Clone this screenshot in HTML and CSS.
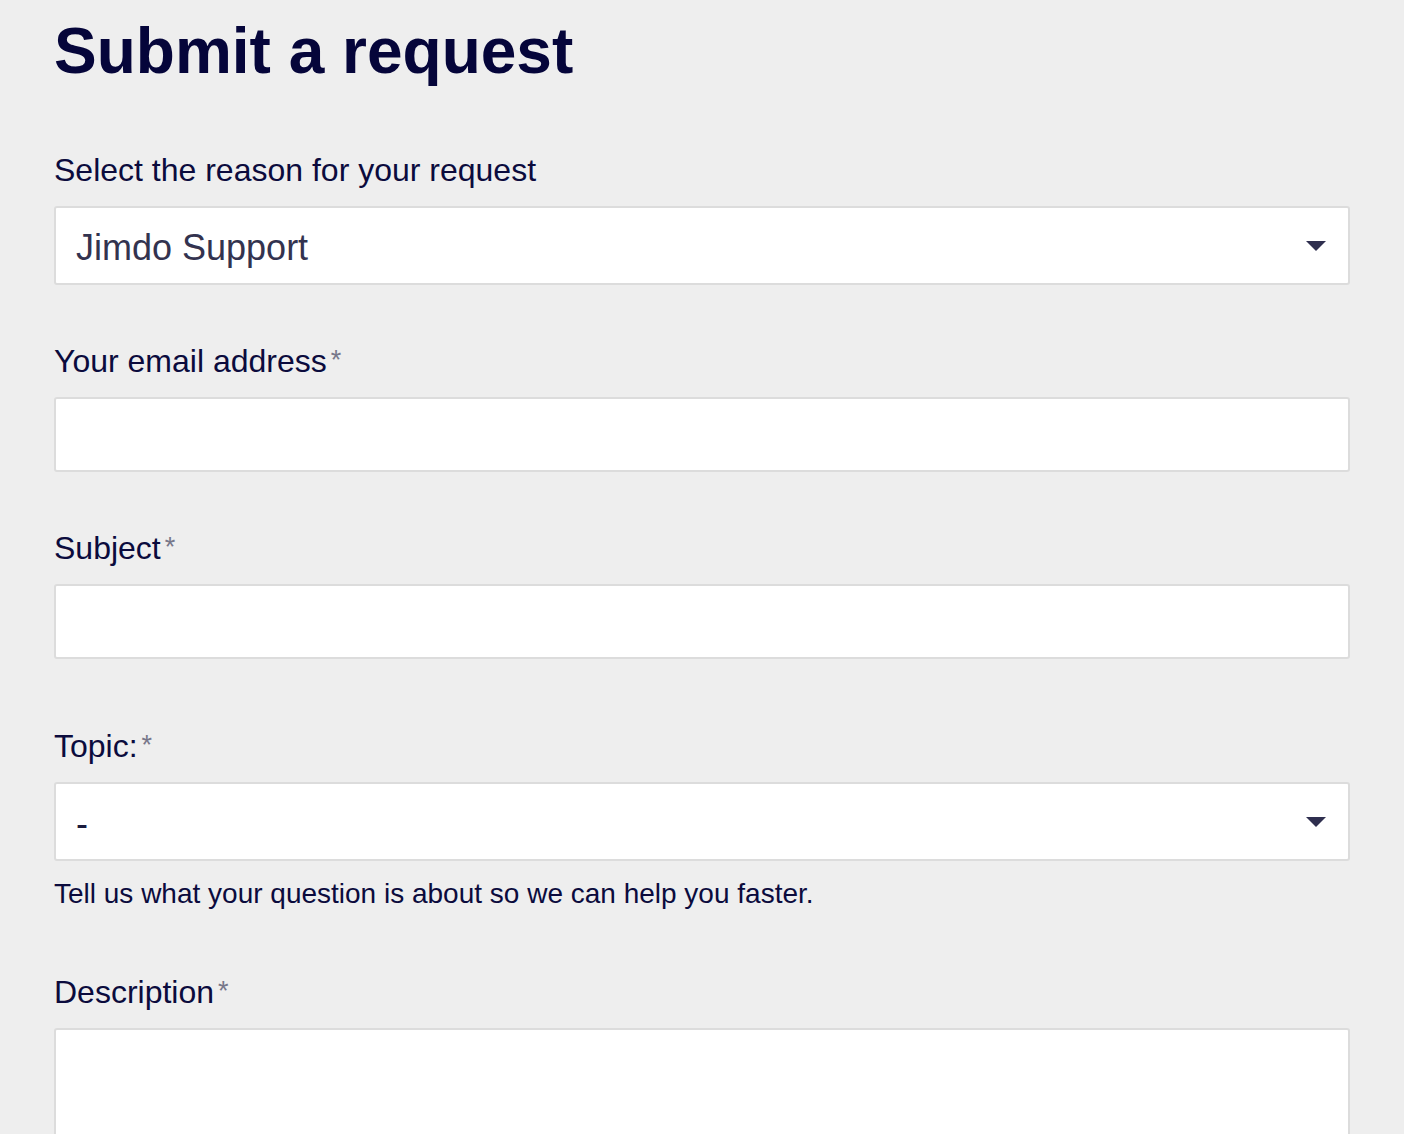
FILE: index.html
```html
<!DOCTYPE html>
<html lang="en">
<head>
<meta charset="utf-8">
<title>Submit a request</title>
<link rel="stylesheet" href="styles.css">
</head>
<body>
<main class="page">
  <h1 class="title">Submit a request</h1>
  <form class="form">
    <div class="field field-first">
      <label class="label">Select the reason for your request</label>
      <div class="select">
        <span class="select-value">Jimdo Support</span>
        <svg class="caret" width="20" height="10" viewBox="0 0 20 10"><path d="M0 0H20L10 10Z" fill="#2f2f4f"/></svg>
      </div>
    </div>
    <div class="field">
      <label class="label">Your email address<span class="req">*</span></label>
      <div class="input"></div>
    </div>
    <div class="field">
      <label class="label">Subject<span class="req">*</span></label>
      <div class="input"></div>
    </div>
    <div class="field field-topic">
      <label class="label">Topic:<span class="req">*</span></label>
      <div class="select select-topic">
        <span class="select-value select-dash">-</span>
        <svg class="caret" width="20" height="10" viewBox="0 0 20 10"><path d="M0 0H20L10 10Z" fill="#2f2f4f"/></svg>
      </div>
      <p class="hint">Tell us what your question is about so we can help you faster.</p>
    </div>
    <div class="field field-desc">
      <label class="label">Description<span class="req">*</span></label>
      <div class="textarea"></div>
    </div>
  </form>
</main>
</body>
</html>
```
FILE: styles.css
```css
html, body {
  margin: 0;
  padding: 0;
  background: #eeeeee;
}
body {
  font-family: "Liberation Sans", Arial, sans-serif;
  color: #0b0b3d;
  overflow: hidden;
}
.page {
  padding: 19px 54px 0 54px;
}
.title {
  margin: 0;
  font-size: 64px;
  line-height: 64px;
  font-weight: 700;
  color: #05053a;
  letter-spacing: 0;
}
.form {
  display: flex;
  flex-direction: column;
}
.field {
  display: flex;
  flex-direction: column;
  margin-top: 56px;
}
.field-first {
  margin-top: 67px;
}
.field-topic {
  margin-top: 67px;
}
.field-desc {
  margin-top: 61px;
}
.label {
  display: block;
  font-size: 32px;
  line-height: 40px;
  margin-bottom: 16px;
  color: #0b0b3d;
}
.req {
  color: #77778a;
  font-size: 27px;
  line-height: 0;
  vertical-align: 3px;
  margin-left: 4px;
}
.select, .input, .textarea {
  box-sizing: border-box;
  background: #ffffff;
  border: 2px solid #dcdcdc;
  border-radius: 3px;
}
.select {
  height: 79px;
  display: flex;
  align-items: center;
  justify-content: space-between;
  padding: 0 22px 0 20px;
}
.select-value {
  font-size: 36px;
  line-height: 40px;
  color: #33334f;
  padding-top: 4px;
}
.select-dash {
  color: #1b1b3d;
}
.caret {
  display: block;
  margin-top: 1px;
}
.input {
  height: 75px;
}
.textarea {
  height: 160px;
}
.hint {
  margin: 16px 0 0 0;
  font-size: 28px;
  line-height: 34px;
  color: #0b0b3d;
}
```
